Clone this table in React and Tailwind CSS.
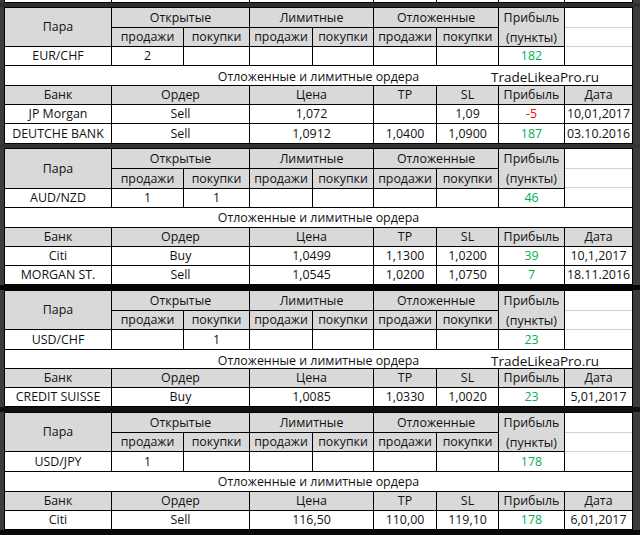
import React from "react";

const G = "text-[#00b050]";
const R = "text-[#ff0000]";

function C({ children, className = "" }) {
  return (
    <div className={"flex items-center justify-center whitespace-nowrap pt-px " + className}>
      {children}
    </div>
  );
}

function Section({ rowsClass, pair, open, lim, pend, profit, brand, orders }) {
  return (
    <div className="flex bg-[#3c3c3c]">
      <div className="w-[4px]" />
      <div
        className={
          "grid grid-cols-[106px_71px_65px_62px_60px_62px_61px_65px_67px] gap-px bg-black p-px " +
          rowsClass
        }
      >
        <C className="row-span-2 bg-[#d9d9d9]">Пара</C>
        <C className="col-span-2 bg-[#d9d9d9]">Открытые</C>
        <C className="col-span-2 bg-[#d9d9d9]">Лимитные</C>
        <C className="col-span-2 bg-[#d9d9d9]">Отложенные</C>
        <div className="row-span-2 flex flex-col bg-[#d9d9d9]">
          <C className="flex-1">Прибыль</C>
          <C className="flex-1">(пункты)</C>
        </div>
        <div className="row-span-3 flex flex-col bg-white">
          <div className="h-[20px] border-b border-[#d0d0d0]" />
          <div className="h-[19px] border-b border-[#d0d0d0]" />
          <div className="flex-1" />
        </div>
        <C className="bg-[#d9d9d9]">продажи</C>
        <C className="bg-[#d9d9d9]">покупки</C>
        <C className="bg-[#d9d9d9]">продажи</C>
        <C className="bg-[#d9d9d9]">покупки</C>
        <C className="bg-[#d9d9d9]">продажи</C>
        <C className="bg-[#d9d9d9]">покупки</C>
        <C className="bg-white">{pair}</C>
        <C className="bg-white">{open[0]}</C>
        <C className="bg-white">{open[1]}</C>
        <C className="bg-white">{lim[0]}</C>
        <C className="bg-white">{lim[1]}</C>
        <C className="bg-white">{pend[0]}</C>
        <C className="bg-white">{pend[1]}</C>
        <C className={"bg-white " + G}>{profit}</C>
        <div className="col-span-9 grid grid-cols-[141px_345px_1fr] bg-white">
          <div />
          <C>Отложенные и лимитные ордера</C>
          <div className="flex items-center pt-px text-[13.5px]">{brand ? "TradeLikeaPro.ru" : ""}</div>
        </div>
        <C className="bg-[#d9d9d9]">Банк</C>
        <C className="col-span-2 bg-[#d9d9d9]">Ордер</C>
        <C className="col-span-2 bg-[#d9d9d9]">Цена</C>
        <C className="bg-[#d9d9d9]">TP</C>
        <C className="bg-[#d9d9d9]">SL</C>
        <C className="bg-[#d9d9d9]">Прибыль</C>
        <C className="bg-[#d9d9d9]">Дата</C>
        {orders.map((o, i) => (
          <React.Fragment key={i}>
            <C className="bg-white">{o.bank}</C>
            <C className="col-span-2 bg-white">{o.order}</C>
            <C className="col-span-2 bg-white">{o.price}</C>
            <C className="bg-white">{o.tp}</C>
            <C className="bg-white">{o.sl}</C>
            <C className={"bg-white " + (o.neg ? R : G)}>{o.profit}</C>
            <C className="bg-white">{o.date}</C>
          </React.Fragment>
        ))}
      </div>
      <div className="flex-1" />
    </div>
  );
}

export default function App() {
  return (
    <div className="w-[640px] h-[535px] overflow-hidden flex flex-col bg-[#3c3c3c] text-[12.4px] text-[#111111] font-['Open_Sans',sans-serif]">
      <div className="flex bg-[#3c3c3c]">
        <div className="w-[4px]" />
        <div className="grid grid-cols-[106px_137px_123px_62px_61px_65px_67px] grid-rows-[2px] gap-px bg-black px-px pb-px">
          <div className="bg-white" />
          <div className="bg-white" />
          <div className="bg-white" />
          <div className="bg-white" />
          <div className="bg-white" />
          <div className="bg-white" />
          <div className="bg-white" />
        </div>
      </div>
      <div className="h-[4px] bg-[#2e2e2e]" />
      <Section
        rowsClass="grid-rows-[19px_18px_18px_19px_18px_18px_19px]"
        pair="EUR/CHF"
        open={["2", ""]}
        lim={["", ""]}
        pend={["", ""]}
        profit="182"
        brand
        orders={[
          { bank: "JP Morgan", order: "Sell", price: "1,072", tp: "", sl: "1,09", profit: "-5", neg: true, date: "10,01,2017" },
          { bank: "DEUTCHE BANK", order: "Sell", price: "1,0912", tp: "1,0400", sl: "1,0900", profit: "187", date: "03.10.2016" },
        ]}
      />
      <div className="h-[4px] bg-[#333333]" />
      <Section
        rowsClass="grid-rows-[19px_19px_18px_19px_18px_18px_18px]"
        pair="AUD/NZD"
        open={["1", "1"]}
        lim={["", ""]}
        pend={["", ""]}
        profit="46"
        orders={[
          { bank: "Citi", order: "Buy", price: "1,0499", tp: "1,1300", sl: "1,0200", profit: "39", date: "10,1,2017" },
          { bank: "MORGAN ST.", order: "Sell", price: "1,0545", tp: "1,0200", sl: "1,0750", profit: "7", date: "18.11.2016" },
        ]}
      />
      <div className="h-[5px] bg-[#050505]" />
      <Section
        rowsClass="grid-rows-[19px_18px_19px_18px_18px_18px]"
        pair="USD/CHF"
        open={["", "1"]}
        lim={["", ""]}
        pend={["", ""]}
        profit="23"
        brand
        orders={[
          { bank: "CREDIT SUISSE", order: "Buy", price: "1,0085", tp: "1,0330", sl: "1,0020", profit: "23", date: "5,01,2017" },
        ]}
      />
      <div className="h-[5px] bg-[#111111]" />
      <Section
        rowsClass="grid-rows-[19px_18px_19px_19px_18px_18px]"
        pair="USD/JPY"
        open={["1", ""]}
        lim={["", ""]}
        pend={["", ""]}
        profit="178"
        orders={[
          { bank: "Citi", order: "Sell", price: "116,50", tp: "110,00", sl: "119,10", profit: "178", date: "6,01,2017" },
        ]}
      />
      <div className="flex-1 bg-[#0a0a0a]" />
    </div>
  );
}
